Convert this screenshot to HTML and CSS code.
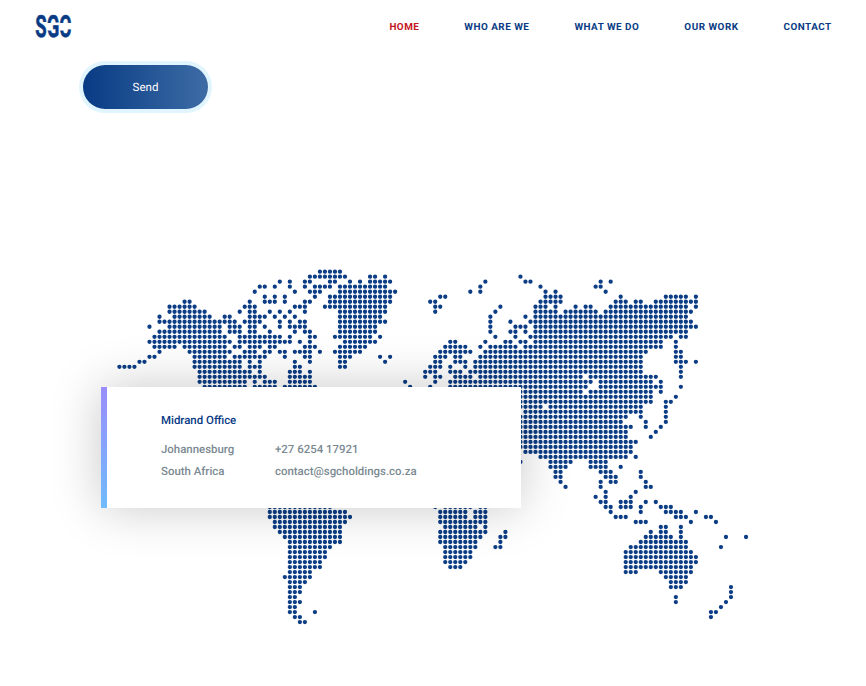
FILE: index.html
```html
<!DOCTYPE html>
<html lang="en">
<head>
<meta charset="utf-8">
<title>SGC Holdings</title>
<link rel="stylesheet" href="styles.css">
</head>
<body>
<header class="header">
  <a class="logo" href="#" aria-label="SGC">
    <svg width="44" height="42" viewBox="0 0 44 42">
      <text class="logo-text" x="0.3" y="31.2" textLength="36" lengthAdjust="spacingAndGlyphs">SGC</text>
      <path class="logo-cut" d="M12 17h4.6v7.5h-4.6zM24.2 17h4.8v7.5h-4.8z"/>
    </svg>
  </a>
  <nav class="nav">
    <a class="active" href="#">Home</a>
    <a href="#">Who are we</a>
    <a href="#">What we do</a>
    <a href="#">Our work</a>
    <a href="#">Contact</a>
  </nav>
</header>
<main>
  <button class="send" type="button">Send</button>
  <section class="locations">
    <svg class="map" width="640" height="364" viewBox="0 0 640 364" aria-hidden="true">
      <path id="dots" class="dots" transform="translate(4.4 3.7) scale(5.013 5.006)"/>
    </svg>
    <article class="card">
      <h2>Midrand Office</h2>
      <div class="details">
        <span>Johannesburg</span><span>+27 6254 17921</span>
        <span>South Africa</span><span>contact@sgcholdings.co.za</span>
      </div>
    </article>
  </section>
</main>
<script src="map.js"></script>
</body>
</html>
```
FILE: styles.css
```css
* { box-sizing: border-box; }

body {
  margin: 0;
  background: #fff;
  color: #083b84;
  font-family: Roboto, "Liberation Sans", sans-serif;
  text-rendering: geometricPrecision;
  overflow: hidden;
}

.header {
  display: flex;
  justify-content: space-between;
  align-items: center;
  height: 53px;
  padding: 0 34.3px 0 35px;
}

.logo, .logo svg { display: block; }
.logo-text {
  fill: #083b84;
  stroke: #083b84;
  stroke-width: 0.6;
  font: 700 30.6px Roboto, sans-serif;
}
.logo-cut { fill: #fff; }

.nav { display: flex; gap: 45px; padding-top: 2px; }
.nav a {
  color: #083b84;
  font-size: 9.88px;
  font-weight: 700;
  letter-spacing: 0.5px;
  line-height: 16px;
  text-decoration: none;
  text-transform: uppercase;
}
.nav .active { color: #c4161c; }

.send {
  display: block;
  width: 125px;
  height: 44px;
  margin: 12px 0 0 83px;
  padding: 0;
  border: 0;
  border-radius: 22px;
  background: linear-gradient(90deg, #083b84, #3d6ca5);
  box-shadow: 0 0 0 4px #e1f5fe;
  color: #fff;
  font: 400 11.5px Roboto, sans-serif;
  text-rendering: geometricPrecision;
}

.locations {
  display: grid;
  margin: 159px 0 0 101px;
}
.map, .card { grid-area: 1 / 1; }
.map { display: block; margin-left: 14px; }

.dots {
  fill: none;
  stroke: #0c3d85;
  stroke-width: 0.86;
  stroke-linecap: round;
  stroke-dasharray: 0 1;
}

.card {
  z-index: 1;
  width: 420px;
  height: 121px;
  margin-top: 119px;
  padding: 25px 0 0 54px;
  border-left: 6px solid;
  border-image: linear-gradient(#9b8cff, #6ebcff) 1;
  background: #fff;
  box-shadow: 0 0 50px rgba(0, 0, 0, 0.22);
}
.card h2 {
  margin: 0 0 11px;
  font-size: 11.45px;
  font-weight: 500;
  line-height: 16px;
}
.details {
  display: grid;
  grid-template-columns: 114px auto;
  color: #7b8a92;
  font-size: 11.43px;
  font-weight: 500;
  line-height: 21.5px;
}
```
FILE: map.js
```js
// Dots of the world map: one string per row, each item a column or a range of columns.
const rows = [
  "40-44",
  "38-45 50-51 53 80",
  "32 34 37-38 42-43 46 48 50-54 73 81-82 96 98",
  "28-29 31 34 37 39-42 44-53 72 84 95-96",
  "27 35 38-40 44-55 70 72 85 87 97",
  "29 31 33 39 42-54 64-65 85-88 100 109-113 115",
  "13-14 26 29-31 33 37-38 42-54 62-63 84-88 99-101 103-104 107-115",
  "10-15 25-27 35-37 41-53 63-64 76 83-85 87 91 93-94 98-113 115",
  "10-17 24 26-27 30 32 34 37 44-53 63 75 83-87 89-95 97-114",
  "8 11-18 21-22 26-29 31 33 35 44-52 74 81 83-113",
  "8-23 25-28 32 34 36-37 44-53 74 78 82-114",
  "6 10-20 22-24 26-27 29 32 34-37 44-51 74 79-81 83-115",
  "8-20 22-24 26-27 30 35 37-38 44-51 74 78-79 81 83-113",
  "7-21 24-32 34 38-39 43-50 52 75 79 82-110 112-113",
  "6-22 24-34 36 38 45-51 66-67 73 77-78 80-81 83-108 111",
  "7-11 13-21 23-24 26-28 30-31 37-39 44-49 65-69 72 74-79 81-108 111",
  "8 14-22 25-27 29-30 32-33 35-38 40 43-48 64-70 73-105 111-112",
  "6-7 15-21 23-29 33 37-38 44-46 52 54 63-65 67-68 72-104 111-112",
  "4-5 15-24 26 28 35 38 44-45 53 63-64 67-69 71-104 111-113 115",
  "0-3 15-24 26-28 35-36 44-45 62-64 66 69 71-104 112",
  "16-26 28 34-36 38 61-63 66-68 70-104 112",
  "16-29 34-38 61 63-64 67-70 72-92 94-107 112",
  "16-25 27 29-31 34-38 57 63 66-94 96-106 108",
  "17-25 27-31 33-39 58 62 66-93 96-108 112",
  "66-92 94-106 108",
  "66-106 111",
  "66-106 109-110",
  "66-84 86-104 109",
  "66-79 81-104 109",
  "66-101 104 109",
  "66-100 105 109",
  "66-102 105 108",
  "66-101 107",
  "66-101 106",
  "66-103",
  "66-102",
  "66-79 81-102",
  "84-101 103",
  "80 86-90 94-97",
  "86-89 94-97 100",
  "87-88 96-98 104",
  "87-88 97-99 104",
  "88 96 98-99 105",
  "89 96 105-106",
  "97 103",
  "95 97 102",
  "96-97 100-102 105 107",
  "30-42 63 65-70 72-73 97-98 100-102 104 108-110",
  "30-45 64-69 71-73 98 104 109-112 115",
  "30-46 64-69 71-73 99-101 111-113 117-118",
  "31-45 64-73 103-105 114 119",
  "31-44 65-71 73 108-109 112",
  "32-44 64-73 77 106 108-109 112",
  "33-44 64-72 76-77 105-110 112 121 125",
  "34-44 64-71 76 104-113",
  "34-42 65-71 75-76 102-113 120",
  "34-41 65-70 101-114",
  "34-41 65-70 101-115",
  "34-40 65-69 101-115",
  "34-40 66-68 101-114",
  "34-38 101-103 108-114",
  "33-38 109-113",
  "34-37 110-113",
  "34-36 110-112 122",
  "34-36 122",
  "34-35 111 122",
  "34-36 111 121",
  "34-35 120",
  "34-35 39 118-119",
  "35-36 118",
  "36-37"
];

const d = rows.map((row, y) => row.split(" ").map(item => {
  const [from, to = from] = item.split("-").map(Number);
  return `M${from} ${y}h${to - from + 0.02}`;
}).join("")).join("");

document.getElementById("dots").setAttribute("d", d);
```
